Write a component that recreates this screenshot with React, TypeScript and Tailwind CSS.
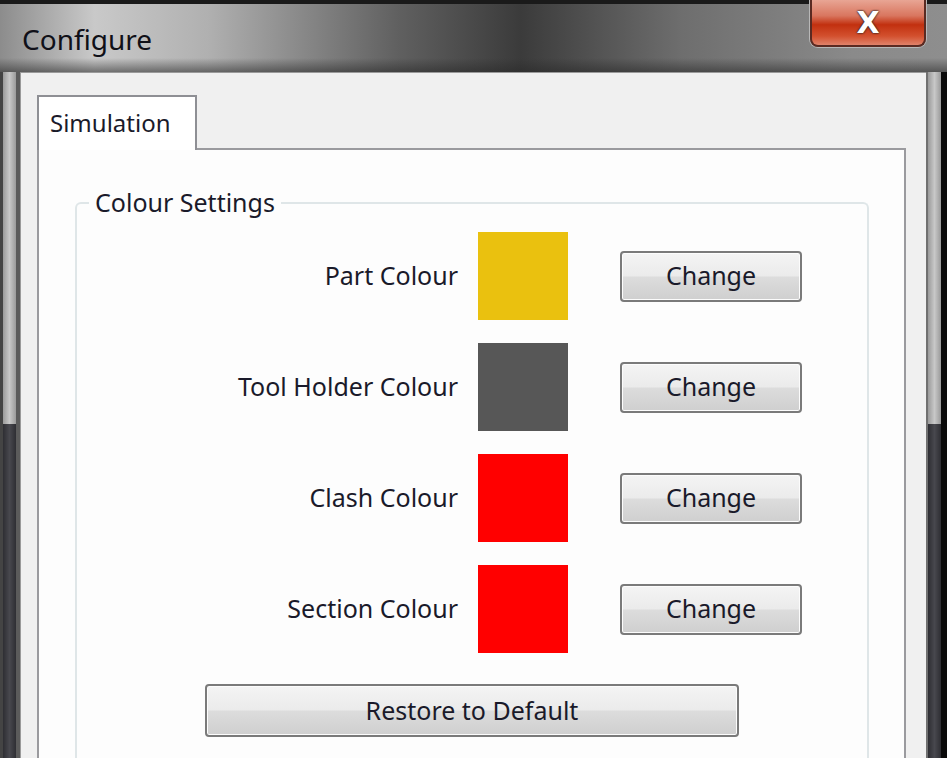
import React from 'react';

const font = { fontFamily: '"Noto Sans", "DejaVu Sans", sans-serif' };

function Win7Button({ label, className }: { label: string; className: string }) {
    return (
        <button
            className={`rounded-[4px] border-2 border-[#7a7a7a] bg-[linear-gradient(to_bottom,#f4f4f4_0%,#ebebeb_48%,#dcdcdc_52%,#cfcfcf_100%)] text-[25px] text-[#1a1a2a] shadow-[inset_0_0_0_1px_#fcfcfc] flex items-center justify-center ${className}`}
        >
            {label}
        </button>
    );
}

function ColourRow({ label, colour }: { label: string; colour: string }) {
    return (
        <div className="flex items-center h-[88px]">
            <div className="w-[383px] text-right text-[25px] text-[#1a1a2a] pr-[2px]">{label}</div>
            <div className="w-[90px] h-[88px] ml-[18px]" style={{ backgroundColor: colour }} />
            <Win7Button label="Change" className="w-[182px] h-[51px] ml-[52px]" />
        </div>
    );
}

export default function App() {
    const rows = [
        { label: 'Part Colour', colour: '#eac10f' },
        { label: 'Tool Holder Colour', colour: '#575757' },
        { label: 'Clash Colour', colour: '#ff0000' },
        { label: 'Section Colour', colour: '#ff0000' },
    ];

    return (
        <div className="w-[947px] h-[758px] overflow-hidden flex flex-col bg-[#111]" style={font}>
            {/* Title bar */}
            <div className="h-[72px] shrink-0 flex border-t-[4px] border-[#1a1a1a] bg-[linear-gradient(to_right,#8c8c8c_0%,#c9c9c9_10%,#b0b0b0_22%,#606060_42%,#3b3b3b_55%,#6e6e6e_72%,#8a8a8a_90%,#8e8e8e_100%)] relative">
                <div className="absolute inset-x-0 bottom-0 h-[14px] bg-[linear-gradient(to_bottom,rgba(40,40,40,0)_0%,rgba(40,40,40,0.55)_100%)]" />
                <div className="flex-1 pl-[22px] pt-[14px] text-[28px] text-[#101018] relative">Configure</div>
                <div className="w-[116px] h-[47px] mr-[21px] -mt-[4px] rounded-b-[8px] border-2 border-t-0 border-[#5a2a22] bg-[linear-gradient(to_bottom,#e8a594_0%,#d9765f_35%,#c2300f_55%,#d3502e_80%,#e0826a_100%)] shadow-[0_0_0_1px_#b8b8b8] flex items-center justify-center relative">
                    <span className="text-[30px] font-bold text-white leading-none [text-shadow:0_0_2px_#222,0_0_2px_#222]" style={{ fontFamily: '"DejaVu Sans", sans-serif' }}>X</span>
                </div>
            </div>

            {/* Body */}
            <div className="flex-1 min-h-0 flex">
                {/* Left frame */}
                <div className="w-[20px] flex bg-[#8a8a8a]">
                    <div className="w-[3px] bg-[#444]" />
                    <div className="w-[13px] flex flex-col">
                        <div className="h-[352px] bg-[linear-gradient(to_right,#9a9a9a,#c8c8c8,#9a9a9a)]" />
                        <div className="flex-1 bg-[linear-gradient(to_right,#2e2e33,#48484e,#2e2e33)]" />
                    </div>
                    <div className="w-[4px] bg-[#5b5b5b]" />
                </div>

                {/* Client area */}
                <div className="w-[906px] bg-[#f0f0f0] border-l border-t border-[#9a9a9a] pl-[16px] pt-[22px] flex flex-col">
                    {/* Tab */}
                    <div className="w-[160px] h-[55px] shrink-0 -mb-[2px] bg-white border-2 border-b-0 border-[#8e8f94] pl-[11px] pt-[8px] text-[24px] text-[#1a1a2a] relative z-10">
                        Simulation
                    </div>
                    {/* Tab panel */}
                    <div className="w-[869px] flex-1 bg-[#fdfdfd] border-2 border-b-0 border-[#9a9a9e] pl-[36px] pr-[35px] pt-[52px]">
                        <div className="relative border-2 border-b-0 border-[#dfe6e8] rounded-t-[6px] pt-[28px] h-[700px]">
                            <div className="absolute -top-[18px] left-[12px] bg-[#fdfdfd] px-[6px] text-[25px] leading-[32px] text-[#1a1a2a]">
                                Colour Settings
                            </div>
                            <div className="flex flex-col gap-[23px]">
                                {rows.map((r) => (
                                    <ColourRow key={r.label} label={r.label} colour={r.colour} />
                                ))}
                            </div>
                            <Win7Button label="Restore to Default" className="w-[534px] h-[53px] ml-[128px] mt-[31px]" />
                        </div>
                    </div>
                </div>

                {/* Right frame */}
                <div className="flex-1 flex bg-[#8a8a8a]">
                    <div className="w-[2px] bg-[#707070]" />
                    <div className="w-[13px] flex flex-col">
                        <div className="h-[352px] bg-[linear-gradient(to_right,#9a9a9a,#c8c8c8,#9a9a9a)]" />
                        <div className="flex-1 bg-[linear-gradient(to_right,#2e2e33,#48484e,#2e2e33)]" />
                    </div>
                    <div className="flex-1 bg-[#0a0a0a]" />
                </div>
            </div>
        </div>
    );
}
